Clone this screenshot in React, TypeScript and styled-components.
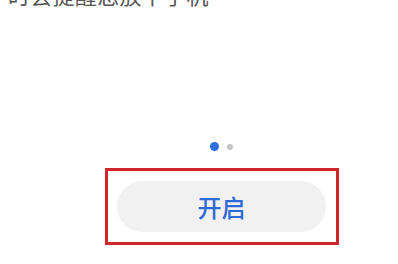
import React from "react";
import styled, { createGlobalStyle } from "styled-components";

const Global = createGlobalStyle`
  html, body { margin: 0; padding: 0; background: #ffffff; }
  body { width: 398px; height: 264px; overflow: hidden; font-family: "Noto Sans CJK SC", "Noto Sans", sans-serif; }
`;

const Page = styled.div`
  width: 398px;
  height: 264px;
  overflow: hidden;
  display: flex;
  flex-direction: column;
  background: #ffffff;
`;

const Title = styled.div`
  margin-top: -17px;
  padding-left: 8px;
  font-size: 22px;
  line-height: 22px;
  height: 22px;
  color: #555555;
  letter-spacing: 0.3px;
  white-space: nowrap;
`;

const Bottom = styled.div`
  display: flex;
  flex-direction: column;
  align-items: center;
  padding-left: 45px;
  margin-top: 137px;
`;

const Dots = styled.div`
  display: flex;
  align-items: center;
  gap: 8px;
  height: 9px;
`;

const Dot = styled.span<{ $active?: boolean }>`
  display: block;
  width: ${(p) => (p.$active ? 9 : 6)}px;
  height: ${(p) => (p.$active ? 9 : 6)}px;
  border-radius: 50%;
  background: ${(p) => (p.$active ? "#2f6fe0" : "#c4c4c4")};
`;

const Highlight = styled.div`
  margin-top: 17px;
  width: 234px;
  height: 77px;
  box-sizing: border-box;
  border: 3px solid #d2262d;
  display: flex;
  align-items: center;
  justify-content: center;
`;

const PillButton = styled.button`
  width: 209px;
  height: 51px;
  border: none;
  border-radius: 26px;
  background: #f1f1f1;
  color: #2f6bd6;
  font-family: "Noto Sans CJK SC", sans-serif;
  font-size: 24px;
  font-weight: 500;
  letter-spacing: 0px;
  padding: 0;
  display: flex;
  align-items: center;
  justify-content: center;
`;

export default function App() {
  return (
    <>
      <Global />
      <Page>
        <Title>时会提醒您放下手机</Title>
        <Bottom>
          <Dots>
            <Dot $active />
            <Dot />
          </Dots>
          <Highlight>
            <PillButton>开启</PillButton>
          </Highlight>
        </Bottom>
      </Page>
    </>
  );
}
